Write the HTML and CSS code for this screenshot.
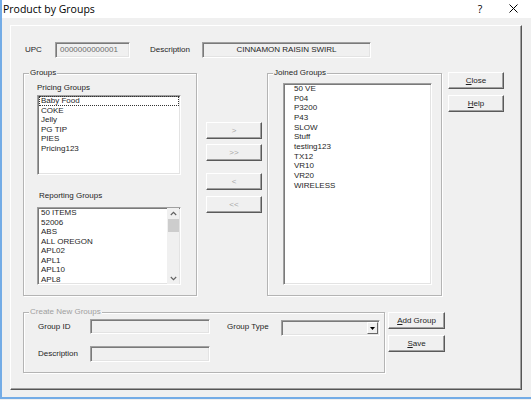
FILE: index.html
```html
<!DOCTYPE html>
<html>
<head>
<meta charset="utf-8">
<title>Product by Groups</title>
<link rel="stylesheet" href="styles.css">
</head>
<body>
<div class="window">
  <div class="titlebar">
    <span class="title">Product by Groups</span>
    <span class="help-q">?</span>
    <svg class="close-x" width="9" height="9" viewBox="0 0 9 9"><path d="M0.5 0.5 L8.5 8.5 M8.5 0.5 L0.5 8.5" stroke="#000" stroke-width="1" fill="none"/></svg>
  </div>
  <div class="client">
    <div class="panel">
      <div class="row-top">
        <span class="lbl lbl-upc">UPC</span>
        <div class="edit edit-upc">0000000000001</div>
        <span class="lbl lbl-desc">Description</span>
        <div class="edit edit-desc">CINNAMON RAISIN SWIRL</div>
      </div>

      <div class="row-mid">
        <div class="group group-groups">
          <span class="group-label">Groups</span>
          <div class="sublabel sub-pricing">Pricing Groups</div>
          <div class="listbox lb-pricing">
            <ul class="items">
              <li class="focused">Baby Food</li>
              <li>COKE</li>
              <li>Jelly</li>
              <li>PG TIP</li>
              <li>PIES</li>
              <li>Pricing123</li>
            </ul>
          </div>
          <div class="sublabel sub-reporting">Reporting Groups</div>
          <div class="listbox lb-reporting">
            <ul class="items">
              <li>50 ITEMS</li>
              <li>52006</li>
              <li>ABS</li>
              <li>ALL OREGON</li>
              <li>APL02</li>
              <li>APL1</li>
              <li>APL10</li>
              <li>APL8</li>
            </ul>
            <div class="vscroll">
              <svg class="chev" width="7" height="5" viewBox="0 0 7 5"><path d="M0.8 4 L3.5 1.3 L6.2 4" stroke="#606060" stroke-width="1.1" fill="none"/></svg>
              <div class="thumb"></div>
              <div class="track"></div>
              <svg class="chev" width="7" height="5" viewBox="0 0 7 5"><path d="M0.8 1 L3.5 3.7 L6.2 1" stroke="#606060" stroke-width="1.1" fill="none"/></svg>
            </div>
          </div>
        </div>

        <div class="arrow-col">
          <div class="btn disabled">&gt;</div>
          <div class="btn disabled b2">&gt;&gt;</div>
          <div class="btn disabled b3">&lt;</div>
          <div class="btn disabled b4">&lt;&lt;</div>
        </div>

        <div class="group group-joined">
          <span class="group-label">Joined Groups</span>
          <div class="listbox lb-joined">
            <ul class="items">
              <li>50 VE</li>
              <li>P04</li>
              <li>P3200</li>
              <li>P43</li>
              <li>SLOW</li>
              <li>Stuff</li>
              <li>testing123</li>
              <li>TX12</li>
              <li>VR10</li>
              <li>VR20</li>
              <li>WIRELESS</li>
            </ul>
          </div>
        </div>

        <div class="side-col">
          <div class="btn"><u>C</u>lose</div>
          <div class="btn b2"><u>H</u>elp</div>
        </div>
      </div>

      <div class="row-bot">
        <div class="group group-create">
          <span class="group-label disabled-text">Create New Groups</span>
          <div class="create-row1">
            <span class="lbl lbl-gid">Group ID</span>
            <div class="edit edit-gid"></div>
            <span class="lbl lbl-gtype">Group Type</span>
            <div class="edit combo">
              <div class="combo-btn"><svg width="5" height="3" viewBox="0 0 5 3"><path d="M0 0 H5 L2.5 3 Z" fill="#000"/></svg></div>
            </div>
          </div>
          <div class="create-row2">
            <span class="lbl lbl-gid">Description</span>
            <div class="edit edit-gdesc"></div>
          </div>
        </div>
        <div class="side-col2">
          <div class="btn"><u>A</u>dd Group</div>
          <div class="btn b2"><u>S</u>ave</div>
        </div>
      </div>
    </div>
  </div>
</div>
</body>
</html>
```

FILE: styles.css
```css
html, body {
  margin: 0;
  padding: 0;
  background: #f0f0f0;
}

body {
  width: 531px;
  height: 400px;
  overflow: hidden;
  font-family: "Liberation Sans", Arial, sans-serif;
  font-size: 8px;
  color: #1e1e1e;
}

.window {
  box-sizing: border-box;
  width: 531px;
  height: 399px;
  border-left: 2px solid #74ace6;
  border-bottom: 2px solid #74ace6;
  background: #f0f0f0;
}

.titlebar {
  height: 18px;
  background: #fff;
  display: flex;
  align-items: center;
  font-family: "Open Sans", "Liberation Sans", sans-serif;
  font-size: 10.5px;
  line-height: 18px;
  color: #000;
}

.title {
  padding-left: 1px;
  flex: 1;
}

.help-q {
  width: 8px;
  text-align: center;
  margin-right: 25px;
}

.close-x {
  margin-right: 13px;
  margin-bottom: 2px;
}

.client {
  padding-left: 8px;
  padding-top: 7px;
}

.panel {
  box-sizing: border-box;
  width: 512px;
  height: 365px;
  border-top: 1px solid #fff;
  border-left: 1px solid #fff;
  border-right: 1px solid #555;
  border-bottom: 1px solid #555;
  box-shadow: inset -1px -1px 0 #a0a0a0;
}

.lbl {
  line-height: 10px;
  white-space: nowrap;
}

.edit {
  box-sizing: border-box;
  background: #f0f0f0;
  border-top: 1px solid #a0a0a0;
  border-left: 1px solid #a0a0a0;
  border-right: 1px solid #fff;
  border-bottom: 1px solid #fff;
  box-shadow: inset 1px 1px 0 #7a7a7a, inset -1px -1px 0 #e3e3e3;
  line-height: 14px;
  white-space: nowrap;
  overflow: hidden;
}

/* top row */
.row-top {
  display: flex;
  align-items: center;
  margin-top: 16px;
  padding-left: 14px;
  height: 16px;
}

.lbl-upc { width: 30px; }

.edit-upc {
  width: 75px;
  height: 16px;
  padding-left: 4px;
  color: #6d6d6d;
}

.lbl-desc {
  margin-left: 20px;
  width: 52px;
}

.edit-desc {
  width: 169px;
  height: 16px;
  text-align: center;
}

/* group boxes */
.group {
  position: relative;
  box-sizing: border-box;
  border: 1px solid #b4b4b4;
  box-shadow: inset 1px 1px 0 #fff, 1px 1px 0 #fff;
}

.group-label {
  position: absolute;
  top: -6px;
  left: 5px;
  padding: 0 1px;
  background: #f0f0f0;
  line-height: 10px;
  white-space: nowrap;
}

.disabled-text { color: #a0a0a0; }

.row-mid {
  display: flex;
  align-items: flex-start;
  margin-top: 15px;
}

.group-groups {
  margin-left: 12px;
  width: 174px;
  height: 223px;
}

.sublabel {
  line-height: 10px;
}

.sub-pricing {
  margin-top: 9px;
  padding-left: 13px;
}

.sub-reporting {
  margin-top: 16px;
  padding-left: 15px;
}

.listbox {
  box-sizing: border-box;
  background: #fff;
  border-top: 1px solid #a0a0a0;
  border-left: 1px solid #a0a0a0;
  border-right: 1px solid #fff;
  border-bottom: 1px solid #fff;
  box-shadow: inset 1px 1px 0 #7a7a7a, inset -1px -1px 0 #e3e3e3;
  overflow: hidden;
}

.items {
  list-style: none;
  margin: 0;
  padding: 0;
}

.items li {
  line-height: 9.5px;
  height: 9.5px;
  padding-left: 2px;
  white-space: nowrap;
}

.items li.focused {
  outline: 1px dotted #333;
  outline-offset: -1px;
}

.lb-pricing {
  margin-top: 2px;
  margin-left: 13px;
  width: 144px;
  height: 80px;
  padding: 0 1px 0 1px;
}

.lb-reporting {
  margin-top: 6px;
  margin-left: 13px;
  width: 144px;
  height: 78px;
  display: flex;
  padding: 0 1px 0 1px;
}

.lb-reporting .items {
  flex: 1;
}

.vscroll {
  width: 12px;
  background: #f0f0f0;
  display: flex;
  flex-direction: column;
  align-items: center;
}

.chev {
  margin: 3px 0 3px 0;
}

.thumb {
  width: 11px;
  height: 13px;
  background: #cdcdcd;
}

.track {
  flex: 1;
}

.arrow-col {
  margin-left: 9px;
  width: 56px;
  padding-top: 49px;
  display: flex;
  flex-direction: column;
}

.btn {
  box-sizing: border-box;
  height: 17px;
  background: #f0f0f0;
  border-top: 1px solid #fff;
  border-left: 1px solid #fff;
  border-right: 1px solid #5a5a5a;
  border-bottom: 1px solid #5a5a5a;
  box-shadow: inset -1px -1px 0 #a0a0a0;
  display: flex;
  align-items: center;
  justify-content: center;
  white-space: nowrap;
  line-height: 10px;
}

.btn.disabled {
  color: #a8a8a8;
}

.btn u {
  text-decoration-thickness: 0.5px;
  text-underline-offset: 1px;
}

.arrow-col .b2 { margin-top: 5px; }
.arrow-col .b3 { margin-top: 12px; }
.arrow-col .b4 { margin-top: 6px; }

.group-joined {
  margin-left: 5px;
  width: 175px;
  height: 223px;
}

.lb-joined {
  margin-top: 9px;
  margin-left: 15px;
  width: 149px;
  height: 202px;
}

.lb-joined .items li {
  line-height: 9.67px;
  height: 9.67px;
  padding-left: 10px;
}

.side-col {
  margin-left: 6px;
  margin-top: -1px;
  width: 56px;
  display: flex;
  flex-direction: column;
}

.side-col .b2 { margin-top: 6px; }

/* bottom */
.row-bot {
  display: flex;
  align-items: flex-start;
  margin-top: 16px;
}

.group-create {
  margin-left: 12px;
  width: 362px;
  height: 61px;
  padding-left: 14px;
}

.create-row1 {
  display: flex;
  align-items: flex-start;
  margin-top: 6px;
  height: 15px;
}

.create-row1 .lbl {
  line-height: 15px;
}

.create-row2 .lbl {
  line-height: 16px;
}

.lbl-gid { width: 52px; }

.edit-gid {
  width: 120px;
  height: 15px;
}

.lbl-gtype {
  margin-left: 17px;
  width: 54px;
}

.combo {
  width: 99px;
  height: 16px;
  margin-top: 1px;
  display: flex;
  justify-content: flex-end;
  align-items: center;
  padding-right: 1px;
}

.combo-btn {
  box-sizing: border-box;
  width: 11px;
  height: 12px;
  background: #f0f0f0;
  border-top: 1px solid #fff;
  border-left: 1px solid #fff;
  border-right: 1px solid #696969;
  border-bottom: 1px solid #696969;
  display: flex;
  align-items: center;
  justify-content: center;
}

.create-row2 {
  display: flex;
  align-items: flex-start;
  margin-top: 12px;
  height: 16px;
}

.edit-gdesc {
  width: 120px;
  height: 16px;
}

.side-col2 {
  margin-left: 3px;
  width: 57px;
  display: flex;
  flex-direction: column;
}

.side-col2 .b2 { margin-top: 6px; }
```
